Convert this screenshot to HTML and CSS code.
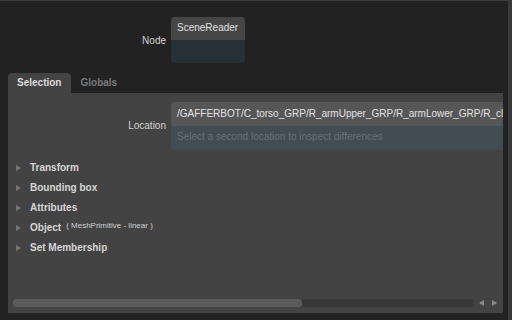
FILE: index.html
```html
<!DOCTYPE html>
<html>
<head>
<meta charset="utf-8">
<link rel="stylesheet" href="styles.css">
</head>
<body>
<div class="app">
  <div class="node-row">
    <div class="label">Node</div>
    <div class="node-box">
      <div class="node-name">SceneReader</div>
      <div class="node-empty"></div>
    </div>
  </div>
  <div class="tabs">
    <div class="tab active">Selection</div>
    <div class="tab">Globals</div>
  </div>
  <div class="panel">
    <div class="loc-row">
      <div class="label loc-label">Location</div>
      <div class="loc-field">
        <div class="loc-path">/GAFFERBOT/C_torso_GRP/R_armUpper_GRP/R_armLower_GRP/R_clawBottom_GRP</div>
        <div class="loc-hint">Select a second location to inspect differences</div>
      </div>
    </div>
    <div class="sections">
      <div class="section"><span class="tri"></span><span class="sec-title">Transform</span></div>
      <div class="section"><span class="tri"></span><span class="sec-title">Bounding box</span></div>
      <div class="section"><span class="tri"></span><span class="sec-title">Attributes</span></div>
      <div class="section"><span class="tri"></span><span class="sec-title">Object</span><span class="sec-sub">( MeshPrimitive - linear )</span></div>
      <div class="section"><span class="tri"></span><span class="sec-title">Set Membership</span></div>
    </div>
    <div class="spacer"></div>
    <div class="hscroll">
      <div class="track"><div class="thumb"></div></div>
      <span class="arrow left"></span>
      <span class="arrow right"></span>
    </div>
  </div>
</div>
</body>
</html>
```
FILE: styles.css
```css
html, body {
  margin: 0;
  padding: 0;
}
body {
  width: 512px;
  height: 320px;
  background: #222222;
  font-family: "Liberation Sans", Arial, sans-serif;
  font-size: 10px;
  color: #d8d8d8;
  overflow: hidden;
}
.app {
  box-sizing: border-box;
  width: 512px;
  height: 320px;
  border-top: 1px solid #3c3c3c;
  border-right: 4px solid #383838;
  padding-left: 8px;
  padding-right: 5px;
  display: flex;
  flex-direction: column;
}
.node-row {
  display: flex;
  margin-top: 16px;
  gap: 5px;
  align-items: center;
}
.label {
  width: 158px;
  text-align: right;
  color: #d4d4d4;
}
.node-box {
  width: 74px;
  height: 46px;
  border-radius: 4px;
  overflow: hidden;
  display: flex;
  flex-direction: column;
}
.node-name {
  height: 23px;
  background: #454545;
  padding-left: 6px;
  line-height: 21px;
  color: #e0e0e0;
}
.node-empty {
  flex: 1;
  background: #263037;
}
.tabs {
  display: flex;
  margin-top: 10px;
  height: 20px;
}
.tab {
  padding: 0 10px 0 9px;
  line-height: 19px;
  font-weight: bold;
  color: #7a7a7a;
  border-radius: 4px 4px 0 0;
}
.tab.active {
  background: #434343;
  color: #dcdcdc;
}
.panel {
  height: 220px;
  background: #434343;
  display: flex;
  flex-direction: column;
  overflow: hidden;
}
.loc-row {
  display: flex;
  gap: 5px;
  margin-top: 9px;
  align-items: flex-start;
}
.loc-label {
  width: 158px;
  margin-top: 18px;
}
.loc-field {
  flex: 1;
  min-width: 0;
  height: 48px;
  border-radius: 4px 0 0 4px;
  overflow: hidden;
  display: flex;
  flex-direction: column;
}
.loc-path {
  height: 24px;
  line-height: 23px;
  background: #565656;
  padding-left: 6px;
  white-space: nowrap;
  overflow: hidden;
  color: #e2e2e2;
}
.loc-hint {
  height: 24px;
  line-height: 21px;
  background: #424c53;
  padding-left: 6px;
  white-space: nowrap;
  color: #667076;
}
.sections {
  margin-top: 7px;
  display: flex;
  flex-direction: column;
}
.section {
  height: 20px;
  display: flex;
  align-items: center;
  padding-left: 8px;
}
.tri {
  width: 0;
  height: 0;
  border-top: 3px solid transparent;
  border-bottom: 3px solid transparent;
  border-left: 5px solid #767676;
  margin-right: 9px;
  margin-top: 1px;
}
.sec-title {
  font-weight: bold;
  color: #d6d6d6;
}
.sec-sub {
  font-size: 8px;
  color: #d0d0d0;
  margin-left: 5px;
  margin-top: -3px;
}
.spacer {
  flex: 1;
}
.hscroll {
  display: flex;
  align-items: center;
  height: 8px;
  margin: 0 0 6px 5px;
}
.track {
  width: 460px;
  height: 8px;
  background: #383838;
  border-radius: 3px;
  display: flex;
}
.thumb {
  width: 289px;
  height: 8px;
  background: #5b5b5b;
  border-radius: 3px;
}
.arrow {
  width: 0;
  height: 0;
  border-top: 3px solid transparent;
  border-bottom: 3px solid transparent;
}
.arrow.left {
  border-right: 5px solid #8a8a8a;
  margin-left: 6px;
}
.arrow.right {
  border-left: 5px solid #8a8a8a;
  margin-left: 8px;
}
```
